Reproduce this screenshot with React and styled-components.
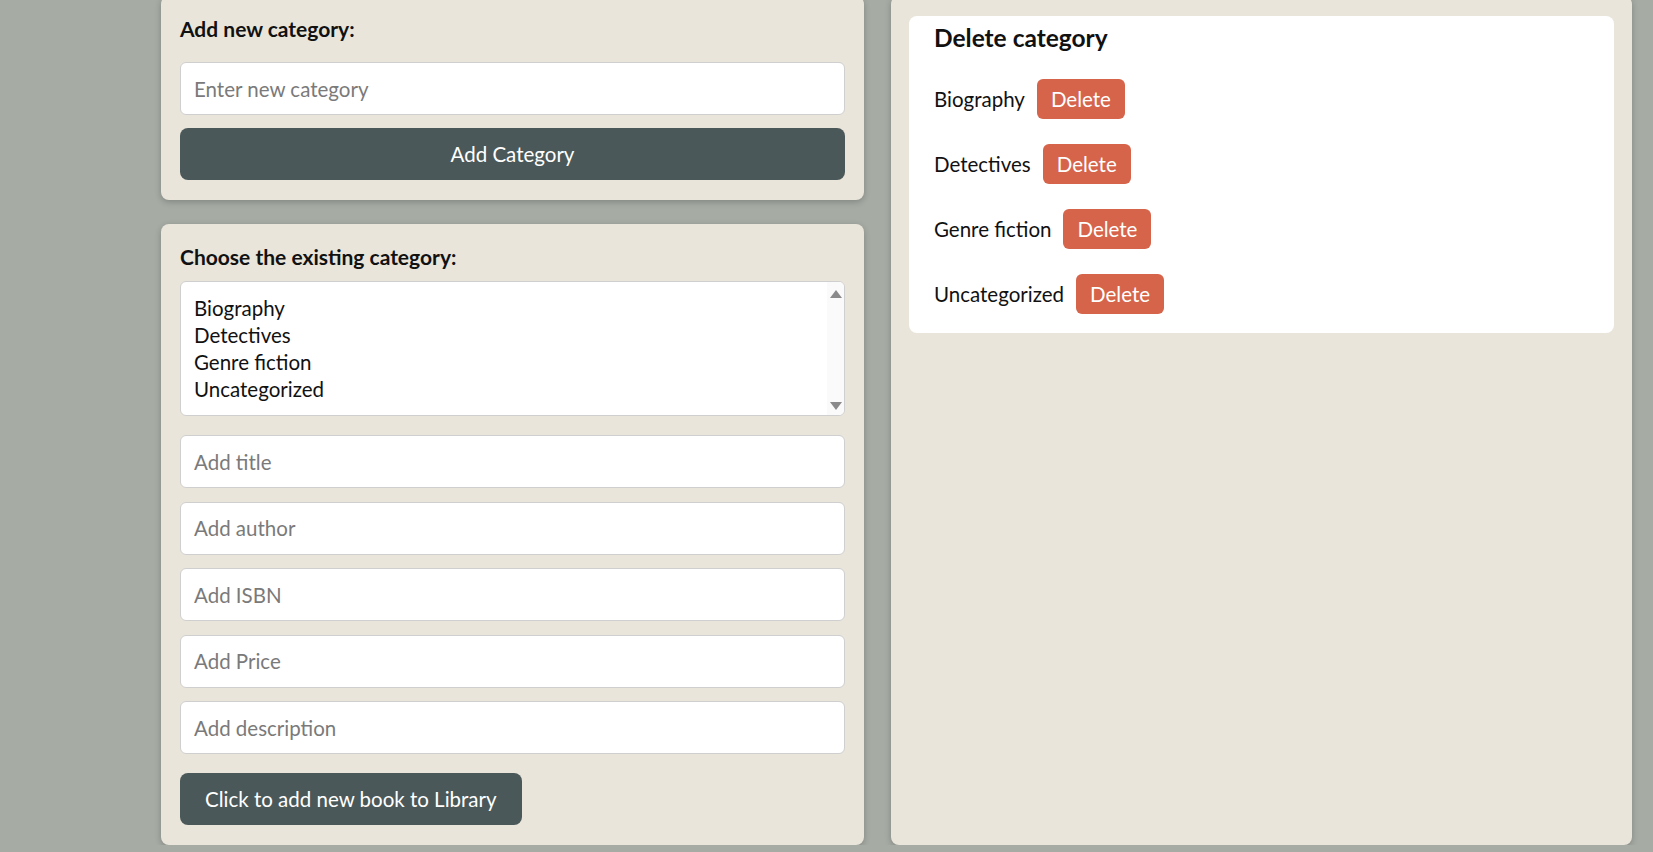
import React from "react";
import styled, { createGlobalStyle } from "styled-components";

const GlobalStyle = createGlobalStyle`
  * {
    box-sizing: border-box;
  }
  body {
    margin: 0;
    background: #a6aba4;
    font-family: "Lato", "Open Sans", sans-serif;
    color: #111;
    overflow: hidden;
  }
`;

const categories = ["Biography", "Detectives", "Genre fiction", "Uncategorized"];
const bookFields = ["Add title", "Add author", "Add ISBN", "Add Price", "Add description"];

function App() {
  return (
    <>
      <GlobalStyle />
      <Page>
        <LeftColumn>
          <Card>
            <Label $gap="20px">Add new category:</Label>
            <Field placeholder="Enter new category" />
            <DarkButton $full>Add Category</DarkButton>
          </Card>
          <Card>
            <Label $gap="11px">Choose the existing category:</Label>
            <ListBox>
              <Options>
                {categories.map((c) => (
                  <Option key={c}>{c}</Option>
                ))}
              </Options>
              <ScrollTrack>
                <Arrow $up />
                <Arrow />
              </ScrollTrack>
            </ListBox>
            <Fields>
              {bookFields.map((f) => (
                <Field key={f} placeholder={f} />
              ))}
            </Fields>
            <DarkButton>Click to add new book to Library</DarkButton>
          </Card>
        </LeftColumn>
        <RightCard>
          <DeletePanel>
            <PanelTitle>Delete category</PanelTitle>
            <DeleteList>
              {categories.map((c) => (
                <DeleteRow key={c}>
                  <span>{c}</span>
                  <DeleteButton>Delete</DeleteButton>
                </DeleteRow>
              ))}
            </DeleteList>
          </DeletePanel>
        </RightCard>
      </Page>
    </>
  );
}

export default App;

const Page = styled.div`
  display: flex;
  align-items: stretch;
  gap: 27px;
  padding-left: 161px;
  margin-top: -4px;
`;

const LeftColumn = styled.div`
  width: 703px;
  display: flex;
  flex-direction: column;
  gap: 24px;
`;

const Card = styled.div`
  background: #e9e5da;
  border-radius: 8px;
  box-shadow: 0 2px 6px rgba(0, 0, 0, 0.22);
  padding: 20px 19px 20px;
  display: flex;
  flex-direction: column;
`;

const RightCard = styled(Card)`
  width: 741px;
  padding: 20px 18px;
`;

const Label = styled.div`
  font-size: 21px;
  font-weight: 700;
  line-height: 26px;
  margin-bottom: ${(p) => p.$gap};
`;

const Field = styled.input`
  width: 100%;
  height: 53px;
  border: 1px solid #cfcfcf;
  border-radius: 6px;
  background: #fff;
  padding: 0 13px;
  font-family: inherit;
  font-size: 20.5px;
  color: #111;
  outline: none;
  &::placeholder {
    color: #7a7a7a;
  }
`;

const Fields = styled.div`
  display: flex;
  flex-direction: column;
  gap: 13.5px;
  margin: 19px 0 19px;
`;

const DarkButton = styled.button`
  align-self: ${(p) => (p.$full ? "stretch" : "flex-start")};
  margin-top: ${(p) => (p.$full ? "13px" : "0")};
  height: 52px;
  padding: 0 25px;
  border: none;
  border-radius: 8px;
  background: #4b5859;
  color: #fff;
  font-family: inherit;
  font-size: 20.5px;
  cursor: pointer;
`;

const ListBox = styled.div`
  height: 135px;
  background: #fff;
  border: 1px solid #cfcfcf;
  border-radius: 6px;
  display: flex;
  overflow: hidden;
`;

const Options = styled.div`
  flex: 1;
  padding: 13px 13px;
`;

const Option = styled.div`
  font-size: 20.5px;
  line-height: 27px;
`;

const ScrollTrack = styled.div`
  width: 17px;
  background: #fafafa;
  display: flex;
  flex-direction: column;
  justify-content: space-between;
  align-items: center;
  padding: 8px 0 5px;
`;

const Arrow = styled.div`
  width: 0;
  height: 0;
  border-left: 6px solid transparent;
  border-right: 6px solid transparent;
  ${(p) =>
    p.$up
      ? "border-bottom: 8px solid #8a8a8a;"
      : "border-top: 8px solid #8a8a8a;"}
`;

const DeletePanel = styled.div`
  background: #fff;
  border-radius: 8px;
  padding: 6px 25px 19px;
`;

const PanelTitle = styled.div`
  font-size: 24.5px;
  font-weight: 700;
  line-height: 32px;
  margin-bottom: 25px;
`;

const DeleteList = styled.div`
  display: flex;
  flex-direction: column;
  gap: 25px;
`;

const DeleteRow = styled.div`
  display: flex;
  align-items: center;
  gap: 12px;
  font-size: 20.5px;
`;

const DeleteButton = styled.button`
  height: 40px;
  padding: 0 14px;
  border: none;
  border-radius: 6px;
  background: #d6644a;
  color: #fff;
  font-family: inherit;
  font-size: 20.5px;
  cursor: pointer;
`;
